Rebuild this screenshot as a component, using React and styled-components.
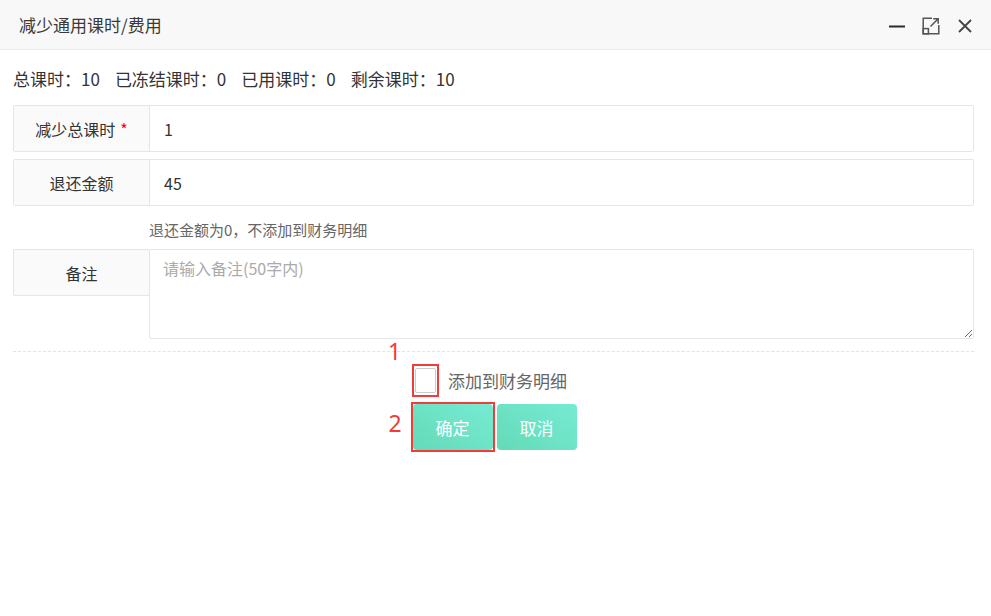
import React from "react"
import styled, { createGlobalStyle } from "styled-components"

const GlobalStyle = createGlobalStyle`
  html, body {
    margin: 0;
    padding: 0;
    background: #fff;
    font-family: "Noto Sans CJK SC", "Noto Sans", sans-serif;
    color: #333;
  }
`

const App = () => {
  return (
    <>
      <GlobalStyle />
      <Dialog>
        <Header>
          <Title>减少通用课时/费用</Title>
          <HeaderTools>
            <ToolButton aria-label="minimize">
              <svg width="18" height="18" viewBox="0 0 18 18">
                <path d="M1 9.5h16" stroke="#2a2a35" strokeWidth="2" />
              </svg>
            </ToolButton>
            <ToolButton aria-label="maximize">
              <svg width="18" height="18" viewBox="0 0 18 18" fill="none" stroke="#555" strokeWidth="1.5">
                <path d="M10 1.2H1.2V16.8H16.8V8" />
                <rect x="1.2" y="11.6" width="5.2" height="5.2" />
                <path d="M8.5 9.5L16.2 1.8M11.2 1.8H16.2V6.8" />
              </svg>
            </ToolButton>
            <ToolButton aria-label="close">
              <svg width="16" height="16" viewBox="0 0 16 16">
                <path d="M2 2L14 14M14 2L2 14" stroke="#444" strokeWidth="1.8" />
              </svg>
            </ToolButton>
          </HeaderTools>
        </Header>

        <Body>
          <Summary>
            <SummaryItem>总课时：10</SummaryItem>
            <SummaryItem>已冻结课时：0</SummaryItem>
            <SummaryItem>已用课时：0</SummaryItem>
            <SummaryItem>剩余课时：10</SummaryItem>
          </Summary>

          <FieldRow>
            <FieldLabel>
              减少总课时<Required>*</Required>
            </FieldLabel>
            <FieldInput defaultValue="1" />
          </FieldRow>
          <FieldRow>
            <FieldLabel>退还金额</FieldLabel>
            <FieldInput defaultValue="45" />
          </FieldRow>
          <Hint>退还金额为0，不添加到财务明细</Hint>

          <TextareaRow>
            <FieldLabel $detached>备注</FieldLabel>
            <Remark placeholder="请输入备注(50字内)" />
          </TextareaRow>

          <Divider />

          <Footer>
            <CheckRow>
              <Marker $top={-24} $left={-24}>1</Marker>
              <Highlight $pad="2px 1px">
                <CheckBox type="checkbox" />
              </Highlight>
              <CheckText>添加到财务明细</CheckText>
            </CheckRow>
            <ButtonRow>
              <Marker $top={10} $left={-22}>2</Marker>
              <Highlight $pad="0">
                <ActionButton>确定</ActionButton>
              </Highlight>
              <ActionButton>取消</ActionButton>
            </ButtonRow>
          </Footer>
        </Body>
      </Dialog>
    </>
  )
}

const Dialog = styled.div`
  width: 991px;
  height: 616px;
  background: #fff;
`

const Header = styled.div`
  display: flex;
  align-items: center;
  justify-content: space-between;
  height: 49px;
  padding: 0 17px 0 19px;
  background: #f8f8f8;
  border-bottom: 1px solid #ebebeb;
`

const Title = styled.div`
  font-size: 17px;
  color: #3a3a3a;
`

const HeaderTools = styled.div`
  display: flex;
  align-items: center;
  gap: 16px;
  margin-top: 2px;
`

const ToolButton = styled.div`
  display: flex;
  align-items: center;
  justify-content: center;
  width: 18px;
  height: 18px;
`

const Body = styled.div`
  padding: 14px 17px 0 13px;
`

const Summary = styled.div`
  display: flex;
  gap: 15px;
  height: 28px;
  align-items: center;
  font-size: 17px;
  color: #333;
  margin-bottom: 13px;
`

const SummaryItem = styled.span`
  white-space: nowrap;
`

const FieldRow = styled.div`
  display: flex;
  height: 47px;
  margin-bottom: 7px;
  border: 1px solid #e6e6e6;
  border-radius: 2px;
  box-sizing: border-box;
`

const FieldLabel = styled.div`
  display: flex;
  align-items: center;
  justify-content: center;
  width: 136px;
  flex-shrink: 0;
  box-sizing: border-box;
  background: #fafafa;
  border-right: 1px solid #e6e6e6;
  font-size: 16px;
  color: #333;
  ${({ $detached }) =>
    $detached &&
    `
    height: 47px;
    border: 1px solid #e6e6e6;
    border-right: none;
    border-radius: 2px 0 0 2px;
  `}
`

const Required = styled.span`
  color: #f00;
  margin-left: 5px;
`

const FieldInput = styled.input`
  flex: 1;
  min-width: 0;
  border: none;
  outline: none;
  padding: 0 14px;
  font-family: inherit;
  font-size: 16px;
  color: #333;
  background: #fff;
`

const Hint = styled.div`
  padding-left: 136px;
  font-size: 15px;
  color: #666;
  height: 36px;
  line-height: 34px;
`

const TextareaRow = styled.div`
  display: flex;
  align-items: flex-start;
`

const Remark = styled.textarea`
  flex: 1;
  height: 90px;
  box-sizing: border-box;
  border: 1px solid #e6e6e6;
  border-radius: 2px;
  padding: 6px 13px;
  outline: none;
  font-family: inherit;
  font-size: 16px;
  color: #333;
  margin: 0;
  &::placeholder {
    color: #aaa;
  }
`

const Divider = styled.div`
  margin-top: 12px;
  border-top: 1px dashed #e3e3e3;
`

const Footer = styled.div`
  display: flex;
  flex-direction: column;
  align-items: center;
  padding-top: 12px;
`

const CheckRow = styled.div`
  position: relative;
  display: flex;
  align-items: center;
  gap: 9px;
  height: 33px;
  margin-right: 8px;
`

const Highlight = styled.div`
  display: flex;
  padding: ${({ $pad }) => $pad};
  border: 2px solid #f23b3b;
`

const CheckBox = styled.input`
  appearance: none;
  margin: 0;
  width: 21px;
  height: 25px;
  border: 1px solid #ccc;
  border-radius: 2px;
  background: #fff;
  box-sizing: border-box;
`

const CheckText = styled.span`
  font-size: 17px;
  color: #666;
`

const ButtonRow = styled.div`
  position: relative;
  display: flex;
  align-items: center;
  gap: 2px;
  margin-top: 5px;
`

const ActionButton = styled.button`
  width: 80px;
  height: 46px;
  border: none;
  border-radius: 4px;
  background: linear-gradient(35deg, #64dab8 0%, #77ebd2 100%);
  color: #fff;
  font-family: inherit;
  font-size: 17px;
  cursor: pointer;
`

const Marker = styled.span`
  position: absolute;
  top: ${({ $top }) => $top}px;
  left: ${({ $left }) => $left}px;
  font-family: "Noto Sans", sans-serif;
  font-size: 23px;
  line-height: 1;
  color: #f23b3b;
`

export default App
